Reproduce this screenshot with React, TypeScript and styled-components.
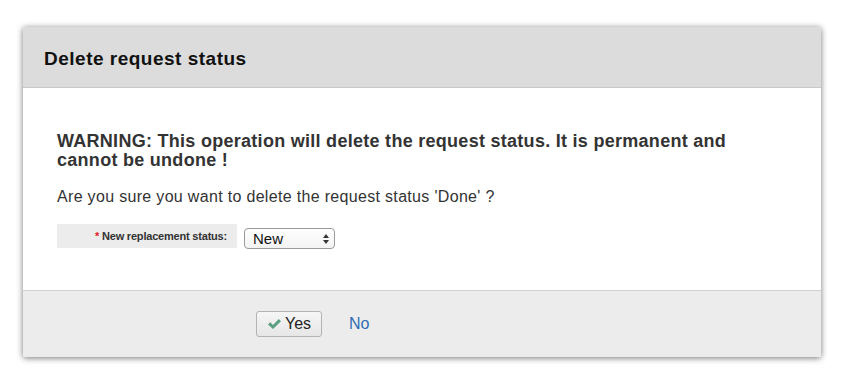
import * as React from "react"
import styled, { createGlobalStyle } from "styled-components"

const GlobalStyle = createGlobalStyle`
    html, body {
        margin: 0;
        padding: 0;
        background: #ffffff;
        font-family: "Liberation Sans", Arial, sans-serif;
    }
`

const Page = styled.div`
    padding: 27px 0 0 23px;
    width: 851px;
    height: 387px;
    box-sizing: border-box;
`

const Dialog = styled.div`
    width: 798px;
    background: #fff;
    border-radius: 2px;
    box-shadow: 0 1px 6px rgba(0, 0, 0, 0.55);
    overflow: hidden;
`

const Header = styled.div`
    height: 61px;
    box-sizing: border-box;
    background: #dcdcdc;
    border-bottom: 1px solid #c8c8c8;
    display: flex;
    align-items: center;
    padding: 3px 21px 0;
`

const Title = styled.h1`
    margin: 0;
    font-size: 19px;
    letter-spacing: 0.5px;
    font-weight: bold;
    color: #111;
`

const Body = styled.div`
    height: 202px;
    box-sizing: border-box;
    padding: 44px 34px 0;
    color: #333;
`

const Warning = styled.p`
    margin: 0;
    font-size: 18px;
    letter-spacing: 0.28px;
    line-height: 19px;
    font-weight: bold;
    max-width: 690px;
`

const Question = styled.p`
    margin: 18px 0 0;
    font-size: 16px;
    letter-spacing: 0.32px;
    line-height: 18px;
`

const FieldRow = styled.div`
    display: flex;
    align-items: flex-start;
    gap: 7px;
    margin-top: 18px;
`

const Label = styled.label`
    width: 180px;
    height: 24px;
    box-sizing: border-box;
    background: #ececec;
    display: flex;
    align-items: center;
    justify-content: flex-end;
    padding-right: 10px;
    font-size: 11px;
    letter-spacing: -0.2px;
    font-weight: bold;
    color: #333;
`

const Required = styled.span`
    color: #e02020;
    margin-right: 3px;
`

const Select = styled.div`
    width: 91px;
    height: 21px;
    margin-top: 4px;
    box-sizing: border-box;
    border: 1px solid #9a9a9a;
    border-radius: 4px;
    background: linear-gradient(#ffffff, #f3f3f3);
    display: flex;
    align-items: center;
    justify-content: space-between;
    padding: 0 5px 0 8px;
    font-size: 15px;
    color: #111;
`

const Footer = styled.div`
    height: 67px;
    box-sizing: border-box;
    background: #ececec;
    border-top: 1px solid #d0d0d0;
    display: flex;
    align-items: center;
    padding: 0 0 1px 233px;
    gap: 27px;
`

const Button = styled.button`
    height: 26px;
    width: 66px;
    box-sizing: border-box;
    border: 1px solid #b4b4b4;
    border-radius: 3px;
    background: linear-gradient(#f6f6f6, #e6e6e6);
    display: flex;
    align-items: center;
    justify-content: center;
    gap: 3px;
    font-family: "Liberation Sans", Arial, sans-serif;
    font-size: 16px;
    color: #222;
    padding: 0;
`

const LinkButton = styled.a`
    font-size: 16px;
    color: #2f6db5;
    text-decoration: none;
`

const Arrows = () => (
    <svg width="6" height="10" viewBox="0 0 6 10">
        <path d="M3 0 L6 4 L0 4 Z M0 6 L6 6 L3 10 Z" fill="#333" />
    </svg>
)

const Check = () => (
    <svg width="15" height="12" viewBox="0 0 14 12">
        <path d="M0.5 6.5 L2.7 4.3 L5.5 7 L11.3 1 L13.5 3.2 L5.5 11 Z" fill="#5b9e80" />
    </svg>
)

const App = () => {
    return (
        <Page>
            <GlobalStyle />
            <Dialog>
                <Header>
                    <Title>Delete request status</Title>
                </Header>
                <Body>
                    <Warning>
                        WARNING: This operation will delete the request status. It is permanent and cannot be undone !
                    </Warning>
                    <Question>Are you sure you want to delete the request status 'Done' ?</Question>
                    <FieldRow>
                        <Label>
                            <Required>*</Required>New replacement status:
                        </Label>
                        <Select>
                            New
                            <Arrows />
                        </Select>
                    </FieldRow>
                </Body>
                <Footer>
                    <Button>
                        <Check />
                        Yes
                    </Button>
                    <LinkButton href="#">No</LinkButton>
                </Footer>
            </Dialog>
        </Page>
    )
}

export default App
